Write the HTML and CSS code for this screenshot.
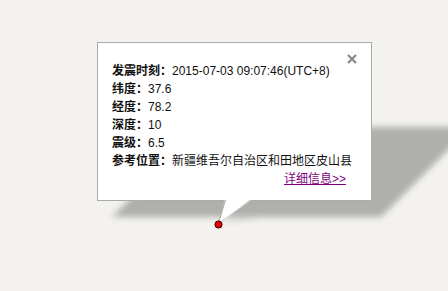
FILE: index.html
```html
<!DOCTYPE html>
<html lang="zh">
<head>
    <meta charset="UTF-8">
    <meta name="viewport" content="width=device-width, initial-scale=1.0">
    <title>地震信息</title>
    <link rel="stylesheet" href="styles.css">
</head>
<body>
    <div class="map">
        <svg class="shadow" width="448" height="291" viewBox="0 0 448 291">
            <defs>
                <filter id="soft" x="-10%" y="-20%" width="120%" height="140%">
                    <feGaussianBlur stdDeviation="3"/>
                </filter>
            </defs>
            <polygon points="112,217 381,217 471,127 202,127" fill="rgba(0,0,0,0.28)" filter="url(#soft)"/>
            <polygon points="220,224 238,217 262,217" fill="rgba(0,0,0,0.12)" filter="url(#soft)"/>
        </svg>

        <div class="info-window">
            <svg class="close" width="10" height="10" viewBox="0 0 10 10">
                <path d="M1 1 L9 9 M9 1 L1 9" stroke="#888" stroke-width="2.2" fill="none"/>
            </svg>
            <div class="info-body">
                <p><b>发震时刻：</b>2015-07-03 09:07:46(UTC+8)</p>
                <p><b>纬度：</b>37.6</p>
                <p><b>经度：</b>78.2</p>
                <p><b>深度：</b>10</p>
                <p><b>震级：</b>6.5</p>
                <p><b>参考位置：</b>新疆维吾尔自治区和田地区皮山县</p>
                <p class="more"><a href="#">详细信息&gt;&gt;</a></p>
            </div>
        </div>

        <svg class="tail" width="448" height="291" viewBox="0 0 448 291">
            <polygon points="225,199 251,199 218.5,224" fill="#fff"/>
            <line x1="225.5" y1="200" x2="218.5" y2="223" stroke="#a8a8a8" stroke-width="1"/>
            <line x1="251" y1="200" x2="219" y2="223" stroke="#d4d4d4" stroke-width="1"/>
            <circle cx="218.5" cy="224.5" r="3.6" fill="#e0000a" stroke="#3a0000" stroke-width="1"/>
        </svg>
    </div>
</body>
</html>
```

FILE: styles.css
```css
body {
    margin: 0;
    background-color: #f3f2ee;
    font-family: "Liberation Sans", Arial, "Noto Sans CJK TC", sans-serif;
    font-size: 12px;
    color: #111;
}
.map {
    position: relative;
    width: 448px;
    height: 291px;
    overflow: hidden;
}
.shadow,
.tail {
    position: absolute;
    left: 0;
    top: 0;
}
.info-window {
    position: absolute;
    left: 97px;
    top: 42px;
    width: 273px;
    height: 157px;
    background-color: #fff;
    border: 1px solid #ababab;
}
.close {
    position: absolute;
    right: 14px;
    top: 11px;
}
.info-body {
    padding: 19px 25px 0 14px;
}
.info-body p {
    margin: 0;
    line-height: 18px;
    white-space: nowrap;
}
.info-body b {
    font-weight: bold;
}
.info-body .more {
    text-align: right;
}
.more a {
    color: #800080;
    text-decoration: underline;
}
```
